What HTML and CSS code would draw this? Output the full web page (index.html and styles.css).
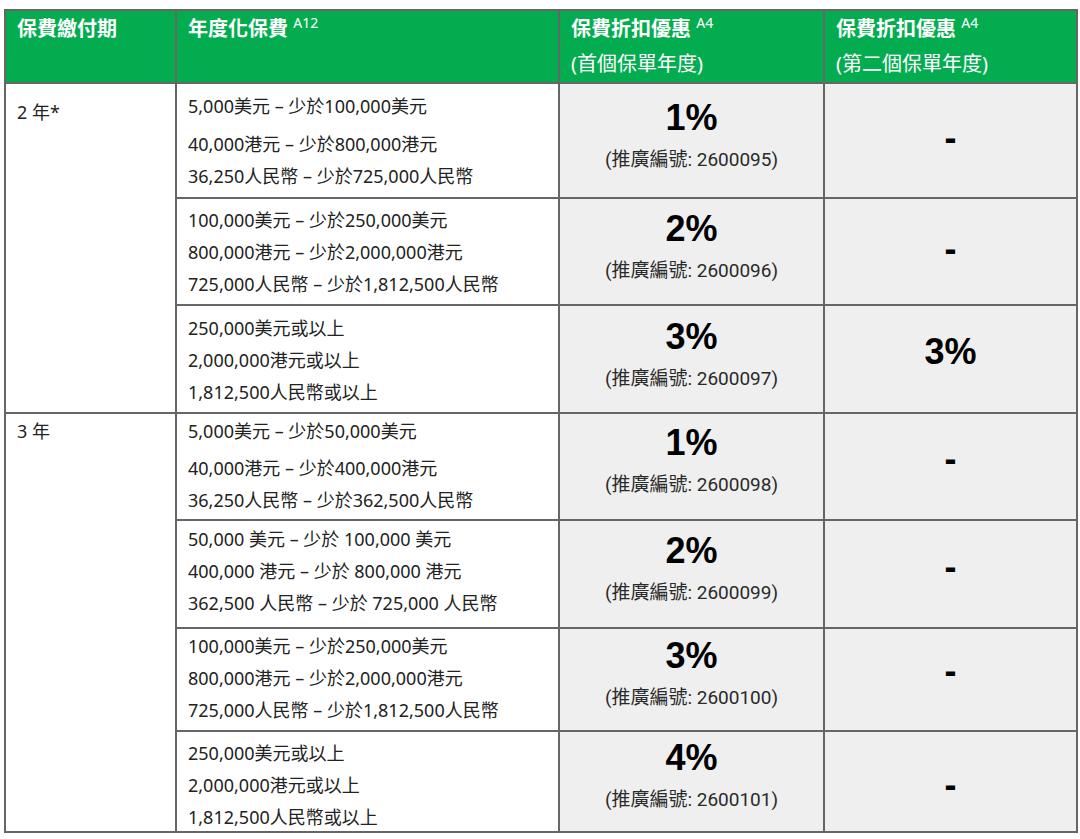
FILE: index.html
```html
<!DOCTYPE html>
<html lang="zh-Hant">
<head>
<meta charset="utf-8">
<title>保費折扣優惠</title>
<link rel="stylesheet" href="styles.css">
</head>
<body>
<div class="table">
  <div class="th"><div class="th-title">保費繳付期</div></div>
  <div class="th"><div class="th-title">年度化保費 <sup class="note">A12</sup></div></div>
  <div class="th"><div class="th-title">保費折扣優惠 <sup class="note">A4</sup></div><div class="th-sub">(首個保單年度)</div></div>
  <div class="th"><div class="th-title">保費折扣優惠 <sup class="note">A4</sup></div><div class="th-sub">(第二個保單年度)</div></div>

  <div class="period span3 p-a">2 年*</div>
  <div class="prem r1"><div class="line gap6">5,000美元 – 少於100,000美元</div><div class="line">40,000港元 – 少於800,000港元</div><div class="line">36,250人民幣 – 少於725,000人民幣</div></div>
  <div class="disc r1"><div class="pct">1%</div><div class="code">(推廣編號: 2600095)</div></div>
  <div class="disc2 r1"><div class="dash">-</div></div>

  <div class="prem r2"><div class="line">100,000美元 – 少於250,000美元</div><div class="line">800,000港元 – 少於2,000,000港元</div><div class="line">725,000人民幣 – 少於1,812,500人民幣</div></div>
  <div class="disc r2"><div class="pct">2%</div><div class="code">(推廣編號: 2600096)</div></div>
  <div class="disc2 r2"><div class="dash">-</div></div>

  <div class="prem r3"><div class="line">250,000美元或以上</div><div class="line">2,000,000港元或以上</div><div class="line">1,812,500人民幣或以上</div></div>
  <div class="disc r3"><div class="pct">3%</div><div class="code">(推廣編號: 2600097)</div></div>
  <div class="disc2 r3"><div class="pct">3%</div></div>

  <div class="period span4 p-b">3 年</div>
  <div class="prem r4"><div class="line gap5">5,000美元 – 少於50,000美元</div><div class="line">40,000港元 – 少於400,000港元</div><div class="line">36,250人民幣 – 少於362,500人民幣</div></div>
  <div class="disc r4"><div class="pct">1%</div><div class="code">(推廣編號: 2600098)</div></div>
  <div class="disc2 r4"><div class="dash">-</div></div>

  <div class="prem r5"><div class="line">50,000 美元 – 少於 100,000 美元</div><div class="line">400,000 港元 – 少於 800,000 港元</div><div class="line">362,500 人民幣 – 少於 725,000 人民幣</div></div>
  <div class="disc r5"><div class="pct">2%</div><div class="code">(推廣編號: 2600099)</div></div>
  <div class="disc2 r5"><div class="dash">-</div></div>

  <div class="prem r6"><div class="line">100,000美元 – 少於250,000美元</div><div class="line">800,000港元 – 少於2,000,000港元</div><div class="line">725,000人民幣 – 少於1,812,500人民幣</div></div>
  <div class="disc r6"><div class="pct">3%</div><div class="code">(推廣編號: 2600100)</div></div>
  <div class="disc2 r6"><div class="dash">-</div></div>

  <div class="prem r7"><div class="line">250,000美元或以上</div><div class="line">2,000,000港元或以上</div><div class="line">1,812,500人民幣或以上</div></div>
  <div class="disc r7"><div class="pct">4%</div><div class="code">(推廣編號: 2600101)</div></div>
  <div class="disc2 r7"><div class="dash">-</div></div>
</div>
</body>
</html>
```

FILE: styles.css
```css
html, body {
  margin: 0;
  padding: 0;
  background: #ffffff;
}

body {
  font-family: "Noto Sans", "Noto Sans CJK TC", sans-serif;
  color: #222222;
}

.table {
  display: grid;
  grid-template-columns: 169px 381px 263px 251px;
  grid-template-rows: 71px 113px 105px 106px 105px 106px 101px 99px;
  gap: 2px;
  padding: 2px;
  background: #666666;
  width: max-content;
  margin: 9px 0 0 4px;
}

.th {
  background: #03ad4f;
  color: #ffffff;
  padding: 0 11px;
  font-size: 20px;
  line-height: 35px;
}

.th-title {
  font-weight: 700;
}

.th-sub {
  font-weight: 400;
}

.note {
  font-size: 14px;
  font-weight: 400;
  vertical-align: 8px;
  line-height: 0;
}

.period {
  background: #ffffff;
  font-size: 18px;
  line-height: 32px;
  padding-left: 11px;
}

.span3 { grid-row: span 3; }
.span4 { grid-row: span 4; }
.p-a { padding-top: 12px; }
.p-b { padding-top: 1px; }

.prem {
  background: #ffffff;
  font-size: 18px;
  line-height: 32px;
  padding-left: 11px;
  white-space: nowrap;
}

.gap6 { margin-bottom: 6px; }
.gap5 { margin-bottom: 5px; }

.disc, .disc2 {
  background: #efefef;
  text-align: center;
}

.pct {
  font-family: "Liberation Sans", Arial, sans-serif;
  font-weight: 700;
  font-size: 36px;
  line-height: 44px;
  color: #000000;
}

.code {
  font-family: Roboto, "Noto Sans CJK TC", sans-serif;
  font-size: 19px;
  line-height: 40px;
  color: #2a2a2a;
}

.dash {
  font-family: "Liberation Sans", Arial, sans-serif;
  font-weight: 700;
  font-size: 36px;
  line-height: 40px;
  color: #000000;
}

/* premium column vertical offsets */
.prem.r1 { padding-top: 6px; }
.prem.r2 { padding-top: 5px; }
.prem.r3 { padding-top: 6px; }
.prem.r4 { padding-top: 1px; }
.prem.r5 { padding-top: 2px; }
.prem.r6 { padding-top: 1px; }
.prem.r7 { padding-top: 5px; }

/* first-year discount column offsets */
.disc.r1 { padding-top: 12px; }
.disc.r2 { padding-top: 8px; }
.disc.r3 { padding-top: 9px; }
.disc.r4 { padding-top: 7px; }
.disc.r5 { padding-top: 8px; }
.disc.r6 { padding-top: 5px; }
.disc.r7 { padding-top: 4px; }

/* second-year discount column offsets */
.disc2.r1 { padding-top: 34px; }
.disc2.r2 { padding-top: 30px; }
.disc2.r3 { padding-top: 24px; }
.disc2.r4 { padding-top: 25px; }
.disc2.r5 { padding-top: 26px; }
.disc2.r6 { padding-top: 22px; }
.disc2.r7 { padding-top: 33px; }
```
